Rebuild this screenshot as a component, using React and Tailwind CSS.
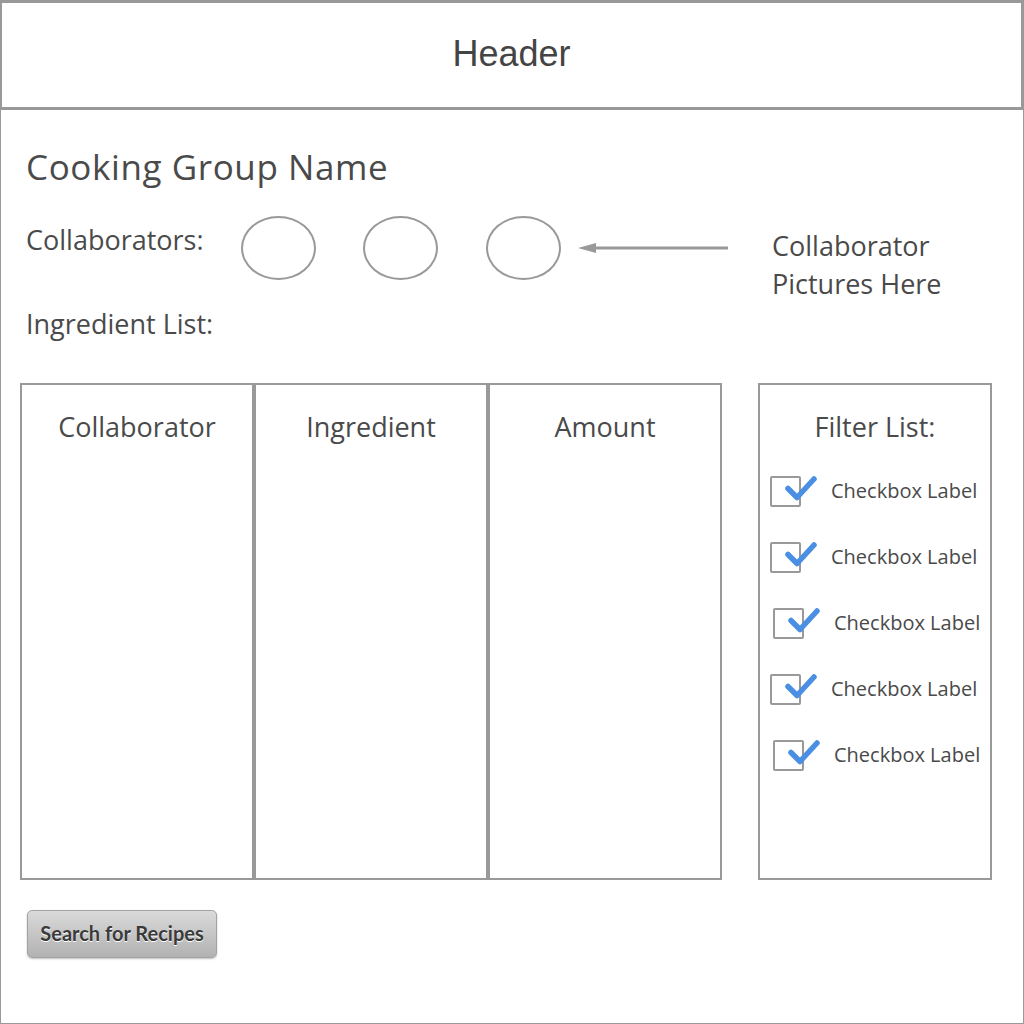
import React from "react";

function Circle({ className = "" }) {
  return <div className={`w-[75px] h-[64px] rounded-[50%] border-2 border-[#999999] shrink-0 ${className}`} />;
}

function Check({ shift }) {
  return (
    <div className={`flex items-center h-[66px] ${shift ? "ml-[13px]" : "ml-[10px]"}`}>
      <div className="relative w-[31px] h-[31px] shrink-0">
        <div className="w-[31px] h-[31px] border-2 border-[#999999] rounded-[2px]" />
        <svg className="absolute left-0 top-0 overflow-visible" width="50" height="31" viewBox="0 0 50 31">
          <path d="M18 12.5 L27 21.5 L44 3" fill="none" stroke="#4a8fe3" strokeWidth="5.5" strokeLinecap="round" strokeLinejoin="round" />
        </svg>
      </div>
      <span className="ml-[30px] text-[20px] leading-none text-[#4a4a4a]">Checkbox Label</span>
    </div>
  );
}

export default function App() {
  return (
    <div className="w-[1024px] h-[1024px] bg-white flex flex-col font-['Open_Sans',sans-serif] text-[#4a4a4a]">
      <header className="h-[110px] shrink-0 border-[3px] border-l-2 border-[#999999] flex items-center justify-center">
        <span className="font-['Liberation_Sans',Arial,sans-serif] text-[36px] leading-none text-[#444444] -mt-[3px]">Header</span>
      </header>
      <main className="flex-1 border border-t-0 border-[#999999] pl-[19px] flex flex-col">
        <h1 className="mt-[39px] ml-[6px] text-[35px] leading-none tracking-[0.6px]">Cooking Group Name</h1>
        <div className="mt-[32px] h-[64px] flex items-start">
          <div className="ml-[6px] mt-[5px] text-[27px] leading-[38px] w-[215px] shrink-0">Collaborators:</div>
          <Circle />
          <Circle className="ml-[47px]" />
          <Circle className="ml-[48px]" />
          <svg className="ml-[16px] mt-[25px] shrink-0" width="154" height="14" viewBox="0 0 154 14">
            <line x1="14" y1="7" x2="151" y2="7" stroke="#999999" strokeWidth="3" />
            <path d="M1 7 L19 2 L19 12 Z" fill="#999999" />
          </svg>
          <div className="ml-[41px] mt-[11px] text-[27px] leading-[38px]">
            <div>Collaborator</div>
            <div>Pictures Here</div>
          </div>
        </div>
        <div className="mt-[30px] ml-[6px] text-[27px] leading-none">Ingredient List:</div>
        <div className="mt-[46px] flex h-[497px]">
          <div className="flex w-[702px]">
            {["Collaborator", "Ingredient", "Amount"].map((h) => (
              <div key={h} className="w-[234px] h-full border-2 border-[#999999] flex justify-center pt-[28px]">
                <span className="text-[27px] leading-none h-[27px]">{h}</span>
              </div>
            ))}
          </div>
          <div className="ml-[36px] w-[234px] h-full border-2 border-[#999999] flex flex-col pt-[28px]">
            <div className="text-[27px] leading-none text-center">Filter List:</div>
            <div className="mt-[18px] flex flex-col">
              <Check />
              <Check />
              <Check shift />
              <Check />
              <Check shift />
            </div>
          </div>
        </div>
        <div className="mt-[30px] ml-[7px]">
          <button className="w-[190px] h-[48px] pb-[3px] rounded-[5px] border border-[#a3a3a3] bg-gradient-to-b from-[#dadada] to-[#b2b2b2] shadow-[0_1px_2px_rgba(0,0,0,0.25)] font-['Lato',sans-serif] font-bold text-[20px] text-[#3a3a3a] [text-shadow:0_1px_0_#ffffff]">
            Search for Recipes
          </button>
        </div>
      </main>
    </div>
  );
}
